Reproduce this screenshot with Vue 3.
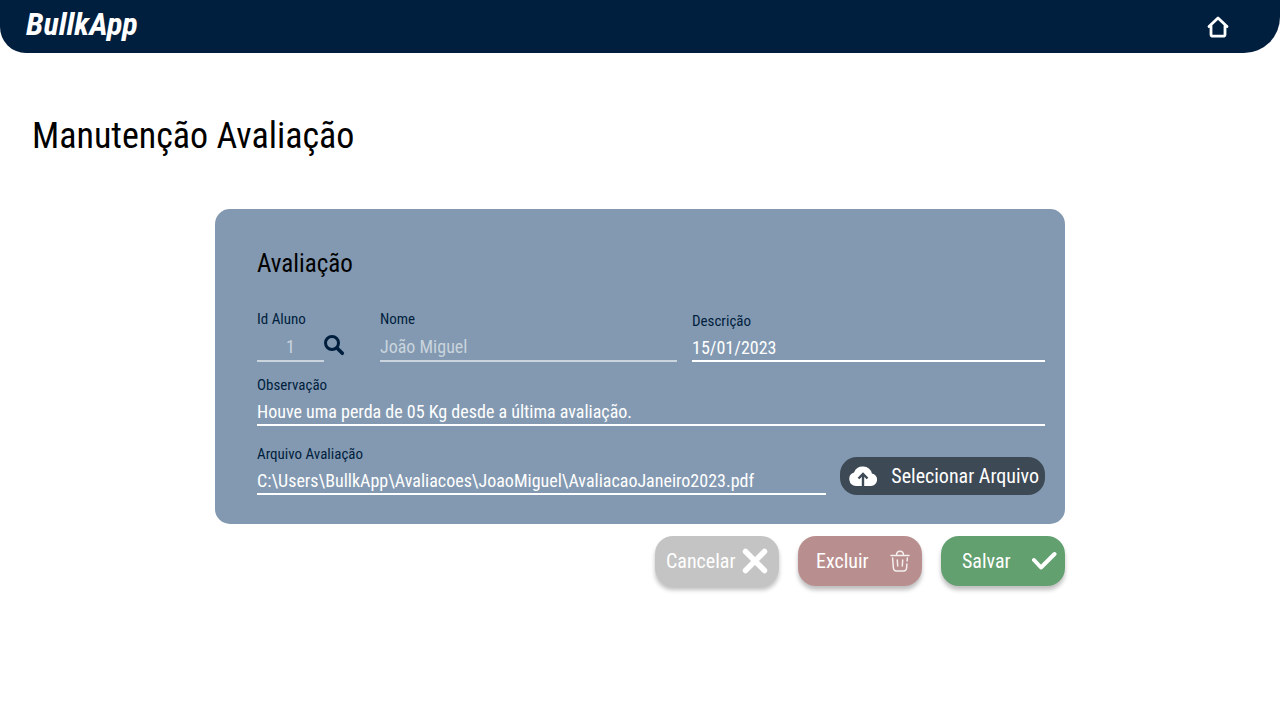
<script setup>
import { ref } from 'vue'

const idAluno = ref('1')
const nome = ref('João Miguel')
const descricao = ref('15/01/2023')
const observacao = ref('Houve uma perda de 05 Kg desde a última avaliação.')
const arquivo = ref('C:\\Users\\BullkApp\\Avaliacoes\\JoaoMiguel\\AvaliacaoJaneiro2023.pdf')
</script>

<template>
  <div class="page">
    <header class="topbar">
      <a class="brand" href="#">BullkApp</a>
      <a class="home" href="#" aria-label="Início">
        <svg width="22" height="22" viewBox="0 0 22 22" fill="none" stroke="#fff" stroke-width="2.800" stroke-linecap="round" stroke-linejoin="round">
          <path d="M2 10.500 11 2l9 8.500M4 9.500v8.700q0 2 2 2h10q2 0 2-2V9.500" />
        </svg>
      </a>
    </header>

    <h1>Manutenção Avaliação</h1>

    <form class="form" @submit.prevent>
      <section class="card">
        <h2>Avaliação</h2>

        <div class="row">
          <div class="lookup">
            <div class="field locked">
              <label for="id-aluno">Id Aluno</label>
              <input id="id-aluno" v-model="idAluno" class="centered" type="text" readonly />
            </div>
            <button class="search" type="button" aria-label="Buscar aluno">
              <svg width="21" height="21" viewBox="0 0 21 21" fill="none" stroke="#001e3d">
                <circle cx="8" cy="8" r="6.500" stroke-width="3" />
                <path d="m13 13 5.300 5.300" stroke-width="3.600" stroke-linecap="round" />
              </svg>
            </button>
          </div>
          <div class="field locked nome">
            <label for="nome">Nome</label>
            <input id="nome" v-model="nome" type="text" readonly />
          </div>
          <div class="field descricao">
            <label for="descricao">Descrição</label>
            <input id="descricao" v-model="descricao" type="text" />
          </div>
        </div>

        <div class="field">
          <label for="observacao">Observação</label>
          <input id="observacao" v-model="observacao" type="text" />
        </div>

        <div class="row file-row">
          <div class="field file">
            <label for="arquivo">Arquivo Avaliação</label>
            <input id="arquivo" v-model="arquivo" type="text" />
          </div>
          <button class="select-file" type="button">
            <svg width="28" height="20" viewBox="0 0 28 20">
              <path d="M7 20a7 7 0 0 1-2-13.600A9.500 9.500 0 0 1 22.900 7.500 6.300 6.300 0 0 1 22 20z" fill="#fff" />
              <path d="M14 20V8.500m-4.500 4L14 8l4.500 4.500" fill="none" stroke="#3d4955" stroke-width="2.400" />
            </svg>
            <span>Selecionar Arquivo</span>
          </button>
        </div>
      </section>

      <div class="actions">
        <button class="action cancel" type="button">
          <span>Cancelar</span>
          <svg width="26" height="26" viewBox="0 0 26 26" fill="none" stroke="#fff" stroke-width="5.500" stroke-linecap="round">
            <path d="m3.500 3.500 19 19m0-19-19 19" />
          </svg>
        </button>
        <button class="action delete" type="button">
          <span>Excluir</span>
          <svg width="20" height="22" viewBox="0 0 20 22" fill="none" stroke="#fff" stroke-opacity=".85" stroke-width="1.500" stroke-linecap="round">
            <path d="M1 5.500h18M6.500 5.200q0-4 3.500-4t3.500 4M2.600 8l.8 10q.3 3 3 3h7.200q2.700 0 3-3l.3-4m.2-3 .3-3M7.300 10l.4 6m5-6-.4 6" />
          </svg>
        </button>
        <button class="action save" type="submit">
          <span>Salvar</span>
          <svg width="26" height="20" viewBox="0 0 26 20" fill="none" stroke="#fff" stroke-width="4" stroke-linecap="round" stroke-linejoin="round">
            <path d="m3 9 7 7.500L23.500 3" />
          </svg>
        </button>
      </div>
    </form>
  </div>
</template>

<style>
body {
  background: #fff;
}
</style>

<style scoped>
.page {
  padding-bottom: 32px;
}

.page,
.page input,
.page button {
  font-family: "Roboto Condensed", "Liberation Sans Narrow", "Arial Narrow", "Liberation Sans", sans-serif;
}

.topbar {
  display: flex;
  align-items: center;
  justify-content: space-between;
  box-sizing: border-box;
  height: 53px;
  padding: 0 51px 0 26px;
  background: #001e3d;
  border-radius: 0 0 36px 26px;
}

.brand {
  padding-bottom: 6px;
  color: #fff;
  font-size: 32px;
  font-style: italic;
  font-weight: 700;
  line-height: 36px;
  text-decoration: none;
}

.home,
.home svg {
  display: block;
}

h1 {
  margin: 59px 32px 49px;
  color: #000;
  font-size: 36px;
  font-weight: 400;
  line-height: 48px;
}

.form {
  max-width: 850px;
  margin: 0 auto;
}

.card {
  display: flex;
  flex-direction: column;
  gap: 13px;
  padding: 39px 20px 29px 42px;
  background: #8399b1;
  border-radius: 15px;
}

h2 {
  margin: 0 0 16px;
  color: #000;
  font-size: 25px;
  font-weight: 400;
  line-height: 32px;
}

.row {
  display: flex;
  align-items: flex-end;
  gap: 15px;
}

.field {
  display: flex;
  flex-direction: column;
  gap: 3px;
  min-width: 0;
}

.field label {
  color: #001e3d;
  font-size: 15px;
  line-height: 20px;
}

.field input {
  box-sizing: border-box;
  width: 100%;
  height: 28px;
  padding: 0;
  border: 0;
  border-bottom: 2px solid #fff;
  outline: 0;
  background: transparent;
  color: #fff;
  font-size: 18px;
}

.locked {
  gap: 5px;
}

.locked input {
  padding-bottom: 2px;
  border-color: #c9d4dd;
  color: #c9d4dd;
}

.lookup {
  display: flex;
  align-items: flex-end;
  width: 88px;
  margin-right: 20px;
}

.field input.centered {
  text-align: center;
}

.search {
  flex: none;
  padding: 0 0 6px;
  border: 0;
  background: none;
}

.search svg,
.select-file svg,
.action svg {
  display: block;
  flex: none;
}

.nome {
  flex: 297;
}

.descricao {
  flex: 353;
}

.file-row {
  gap: 14px;
  padding-top: 5px;
}

.file {
  flex: 1;
}

.select-file {
  display: flex;
  align-items: center;
  justify-content: space-between;
  width: 205px;
  height: 38px;
  padding: 0 6px 0 9px;
  border: 0;
  border-radius: 17px;
  background: #3d4955;
  color: #fff;
  font-size: 20px;
  white-space: nowrap;
}

.actions {
  display: flex;
  justify-content: flex-end;
  gap: 19px;
  margin-top: 12px;
}

.action {
  display: flex;
  align-items: center;
  justify-content: space-between;
  width: 124px;
  height: 50px;
  padding: 0 11px;
  border: 0;
  border-radius: 18px;
  box-shadow: 0 4px 4px rgba(0, 0, 0, 0.25);
  color: #fff;
  font-size: 20px;
}

.cancel {
  background: #c4c4c4;
}

.delete {
  padding: 0 12px 0 18px;
  background: #b98e8e;
}

.save {
  padding: 0 8px 0 21px;
  background: #62a070;
}
</style>
